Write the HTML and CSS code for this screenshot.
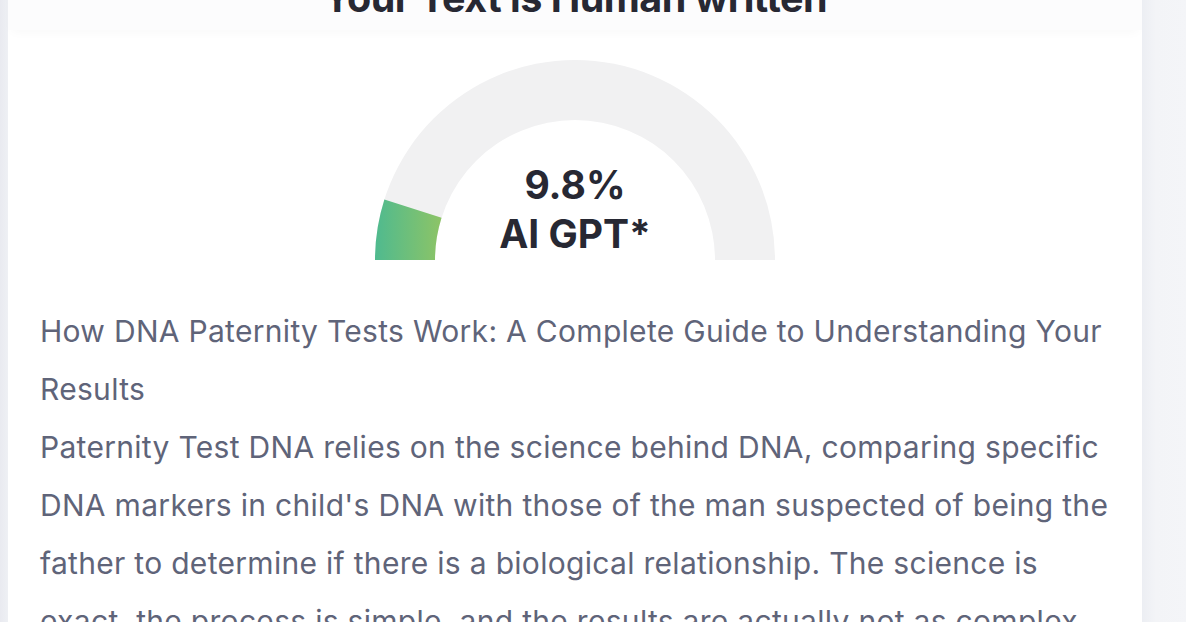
FILE: index.html
```html
<!DOCTYPE html>
<html lang="en">
<head>
<meta charset="utf-8">
<title>AI Detector Result</title>
<link rel="stylesheet" href="styles.css">
</head>
<body>
<div class="page">
  <main class="card">
    <header class="result-head">
      <h1 class="result-title">Your Text is Human written</h1>
    </header>
    <section class="gauge">
      <svg class="gauge-svg" width="400" height="200" viewBox="0 0 400 200">
        <defs>
          <linearGradient id="scoreGrad" x1="0" y1="0" x2="1" y2="0">
            <stop offset="0" stop-color="#4fba8f"/>
            <stop offset="1" stop-color="#8dc466"/>
          </linearGradient>
        </defs>
        <!-- full track: outer r=200, inner r=140 -->
        <path d="M0 200 A200 200 0 0 1 400 200 L340 200 A140 140 0 0 0 60 200 Z" fill="#f1f1f2"/>
        <!-- score arc, 9.8% of the half circle -->
        <path d="M0 200 A200 200 0 0 1 9.38 139.6 L66.56 157.67 A140 140 0 0 0 60 200 Z" fill="url(#scoreGrad)"/>
      </svg>
      <div class="gauge-label">
        <span class="gauge-value">9.8%</span>
        <span class="gauge-kind">AI GPT*</span>
      </div>
    </section>
    <article class="source-text">
      <p>How DNA Paternity Tests Work: A Complete Guide to Understanding Your Results</p>
      <p>Paternity Test DNA relies on the science behind DNA, comparing specific DNA markers in child's DNA with those of the man suspected of being the father to determine if there is a biological relationship. The science is exact, the process is simple, and the results are actually not as complex as they may seem.</p>
    </article>
  </main>
  <aside class="side"></aside>
</div>
</body>
</html>
```

FILE: styles.css
```css
* { box-sizing: border-box; }

html, body {
  margin: 0;
  padding: 0;
  height: 100%;
  overflow: hidden;
}

body {
  background: #f3f4f7;
  font-family: Inter, "Noto Sans", "Liberation Sans", sans-serif;
  color: #272833;
}

.page {
  display: flex;
  height: 100%;
  padding-left: 8px;
  background: linear-gradient(90deg, #e9eaf0 0, #eef0f4 8px, transparent 8px);
}

.card {
  width: 1134px;
  flex: none;
  background: #ffffff;
  margin-top: -28px;
  display: flex;
  flex-direction: column;
}

.side {
  flex: 1;
  background: linear-gradient(90deg, #eceef3 0, #f3f4f7 14px, #f4f5f8 100%);
}

.result-head {
  padding: 0 0 6px;
  background: #fcfcfd;
  box-shadow: 0 6px 10px -4px rgba(0, 0, 0, 0.03);
  text-align: center;
}

.result-title {
  margin: 0;
  font-size: 39.5px;
  line-height: 52px;
  font-weight: 700;
  color: #272833;
  letter-spacing: -0.5px;
}

.gauge {
  display: flex;
  justify-content: center;
  margin-top: 30px;
  position: relative;
  height: 200px;
}

.gauge-svg {
  display: block;
}

.gauge-label {
  position: absolute;
  left: 0;
  right: 0;
  top: 100px;
  display: flex;
  flex-direction: column;
  align-items: center;
  font-weight: 700;
  font-size: 39px;
  line-height: 49px;
  color: #272833;
}

.source-text {
  padding: 42px 32px 0;
  color: #5f6479;
  font-size: 30px;
  line-height: 58px;
  letter-spacing: 0.3px;
}

.source-text p {
  margin: 0;
}
```
